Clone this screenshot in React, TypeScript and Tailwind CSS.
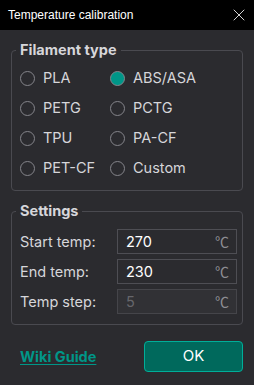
import { X } from "lucide-react";
import { useState } from "react";

const filaments = ["PLA", "ABS/ASA", "PETG", "PCTG", "TPU", "PA-CF", "PET-CF", "Custom"];

function Radio({ label, checked, onSelect }: { label: string; checked: boolean; onSelect: () => void }) {
  return (
    <label onClick={onSelect} className="flex h-[30px] items-center gap-2 cursor-pointer">
      <span
        className={
          checked
            ? "w-[15px] h-[15px] rounded-full border-[1.5px] border-[#85858b] bg-[#009688]"
            : "w-[15px] h-[15px] rounded-full border-[1.5px] border-[#85858b]"
        }
      />
      <span className="text-[14.5px] text-[#d6d6da]">{label}</span>
    </label>
  );
}

function TempInput({ value, disabled }: { value: string; disabled?: boolean }) {
  return (
    <div
      className={
        disabled
          ? "flex items-center w-[120px] h-[25px] border border-[#45454a] bg-[#313135] pl-2 pr-[7px]"
          : "flex items-center w-[120px] h-[25px] border border-[#4e4e54] pl-2 pr-[7px]"
      }
    >
      <span className={disabled ? "flex-1 text-[14.5px] text-[#66666b]" : "flex-1 text-[14.5px] text-white"}>{value}</span>
      <span className="text-[14px] text-[#8e8e94]" style={{ fontFamily: "'Noto Sans CJK SC', sans-serif" }}>
        ℃
      </span>
    </div>
  );
}

export default function App() {
  const [selected, setSelected] = useState("ABS/ASA");

  return (
    <div className="w-[254px] h-[385px] bg-[#2b2b2f] flex flex-col" style={{ fontFamily: "Inter, 'Noto Sans', sans-serif" }}>
      {/* title bar */}
      <div className="h-[30px] bg-black flex items-center justify-between pl-2 pr-[5px]">
        <span className="text-[12px] text-white" style={{ fontFamily: "'Liberation Sans', sans-serif" }}>
          Temperature calibration
        </span>
        <X size={20} strokeWidth={1} className="text-white" />
      </div>

      <div className="flex flex-col px-[11px]">
        <fieldset className="mt-[11px] border border-[#4a4a50] rounded-[4px] pl-2 pr-[5px] pt-1 pb-[7px]">
          <legend className="-ml-1 px-1 text-[14.5px] leading-[18px] font-bold text-[#d6d6da]">Filament type</legend>
          <div className="grid grid-cols-[90px_1fr]">
            {filaments.map((f) => (
              <Radio key={f} label={f} checked={selected === f} onSelect={() => setSelected(f)} />
            ))}
          </div>
        </fieldset>

        <fieldset className="mt-[11px] border border-[#4a4a50] rounded-[4px] pl-2 pr-[5px] pt-[9px] pb-[10px]">
          <legend className="-ml-1 px-1 text-[14.5px] leading-[18px] font-bold text-[#d6d6da]">Settings</legend>
          <div className="flex flex-col gap-[5px]">
            <div className="flex items-center justify-between">
              <span className="text-[14.5px] text-[#d6d6da]">Start temp:</span>
              <TempInput value="270" />
            </div>
            <div className="flex items-center justify-between">
              <span className="text-[14.5px] text-[#d6d6da]">End temp:</span>
              <TempInput value="230" />
            </div>
            <div className="flex items-center justify-between">
              <span className="text-[14.5px] text-[#d6d6da]">Temp step:</span>
              <TempInput value="5" disabled />
            </div>
          </div>
        </fieldset>

        <div className="mt-4 flex items-center justify-between">
          <a className="ml-[9px] text-[14.5px] font-bold text-[#009688] underline underline-offset-2 cursor-pointer">Wiki Guide</a>
          <button className="w-[99px] h-[31px] rounded-[4px] border border-[#00ae99] bg-[#00695c] text-[15px] text-white">
            OK
          </button>
        </div>
      </div>
    </div>
  );
}
